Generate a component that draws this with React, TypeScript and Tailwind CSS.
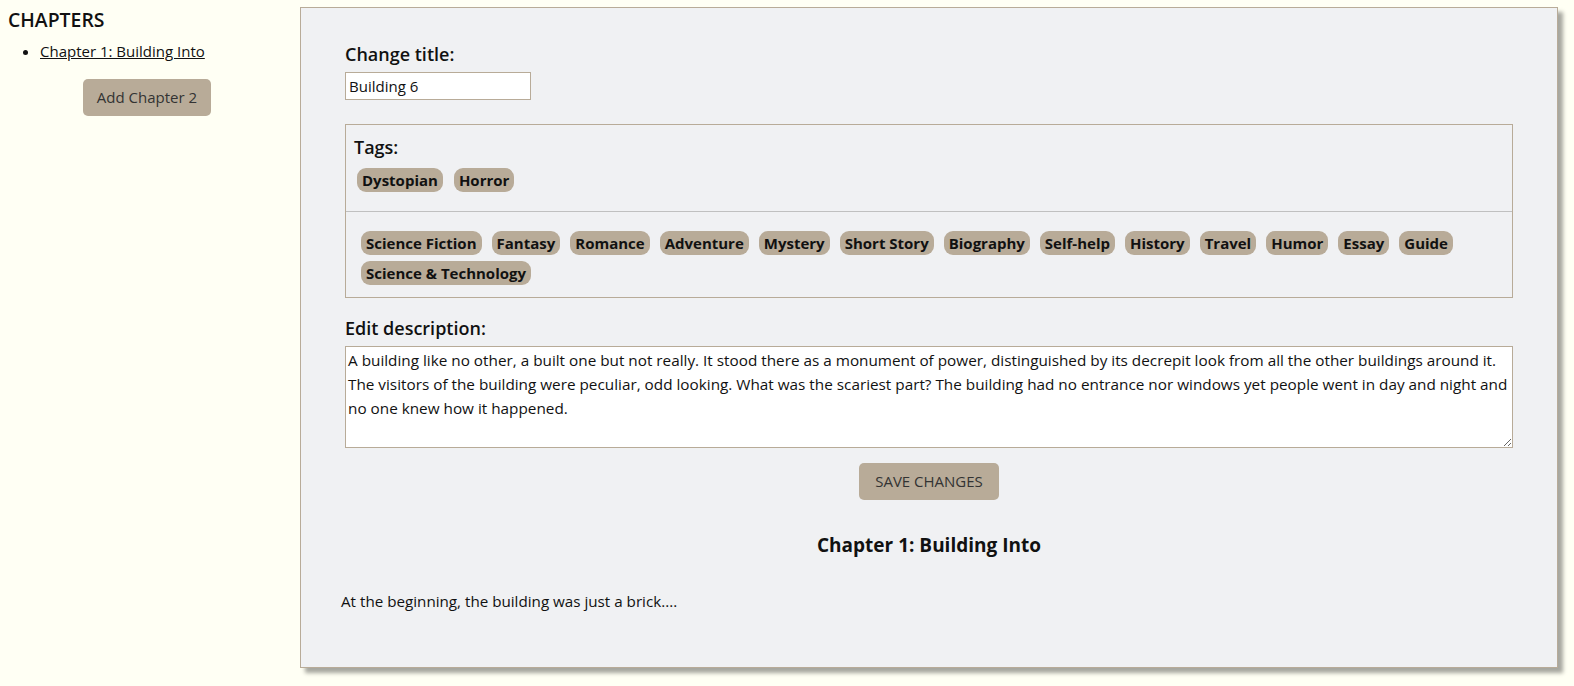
import React from "react";

const selectedTags = ["Dystopian", "Horror"];
const otherTags = [
  "Science Fiction",
  "Fantasy",
  "Romance",
  "Adventure",
  "Mystery",
  "Short Story",
  "Biography",
  "Self-help",
  "History",
  "Travel",
  "Humor",
  "Essay",
  "Guide",
  "Science & Technology",
];

const description =
  "A building like no other, a built one but not really. It stood there as a monument of power, distinguished by its decrepit look from all the other buildings around it. The visitors of the building were peculiar, odd looking. What was the scariest part? The building had no entrance nor windows yet people went in day and night and no one knew how it happened.";

function Tag({ label }: { label: string }) {
  return (
    <span className="inline-block rounded-[9px] bg-[#b8ab98] px-[5px] py-[1px] text-[15px] font-bold leading-[22px] text-[#111]">
      {label}
    </span>
  );
}

export default function App() {
  return (
    <div
      className="flex min-h-[686px] bg-[#fffff4] text-[#111]"
      style={{ fontFamily: '"Open Sans", "Noto Sans", sans-serif' }}
    >
      {/* Sidebar */}
      <aside className="w-[300px] shrink-0 pl-2 pr-[14px] pt-[8px]">
        <h2 className="text-[19.4px] font-semibold leading-[24px]">CHAPTERS</h2>
        <ul className="mt-[8px] list-disc pl-[32px] text-[15px]">
          <li className="leading-[22px]">
            <a href="#" className="underline">
              Chapter 1: Building Into
            </a>
          </li>
        </ul>
        <div className="mt-[17px] flex justify-center">
          <button className="rounded-[5px] bg-[#b8ab98] px-[14px] py-[8px] text-[15px] leading-[21px] text-[#333]">
            Add Chapter 2
          </button>
        </div>
      </aside>

      {/* Main panel */}
      <main className="mt-[7px] mb-[18px] w-[1258px] border border-[#b8ab98] bg-[#f0f1f3] px-[44px] pt-[33px] pb-[40px] shadow-[5px_5px_4px_rgba(0,0,0,0.35)]">
        <label className="block text-[18px] font-semibold leading-[26px]">Change title:</label>
        <input
          defaultValue="Building 6"
          className="mt-[5px] h-[28px] w-[186px] border border-[#b8ab98] bg-white px-[3px] text-[15px] outline-none"
        />

        <div className="mt-[24px] border border-[#b8ab98]">
          <div className="px-[8px] pt-[10px] pb-[19px]">
            <div className="text-[18px] font-semibold leading-[24px]">Tags:</div>
            <div className="mt-[9px] flex flex-wrap gap-[11px] pl-[3px]">
              {selectedTags.map((t) => (
                <Tag key={t} label={t} />
              ))}
            </div>
          </div>
          <div className="border-t border-[#c0c0c0] px-[15px] pt-[19px] pb-[12px]">
            <div className="flex flex-wrap gap-x-[10px] gap-y-[6px]">
              {otherTags.map((t) => (
                <Tag key={t} label={t} />
              ))}
            </div>
          </div>
        </div>

        <label className="mt-[17px] block text-[18px] font-semibold leading-[26px]">Edit description:</label>
        <textarea
          defaultValue={description}
          className="mt-[5px] block h-[102px] w-full border border-[#b8ab98] bg-white px-[2px] py-[1px] text-[15.3px] leading-[24px] outline-none"
        />

        <div className="mt-[15px] flex justify-center">
          <button className="rounded-[5px] bg-[#b8ab98] px-[16px] py-[8px] text-[15px] leading-[21px] text-[#333]">
            SAVE CHANGES
          </button>
        </div>

        <h3 className="mt-[32px] text-center text-[19px] font-bold leading-[26px]">Chapter 1: Building Into</h3>
        <p className="mt-[32px] -ml-[4px] text-[15.2px] leading-[22px]">At the beginning, the building was just a brick....</p>
      </main>
    </div>
  );
}
